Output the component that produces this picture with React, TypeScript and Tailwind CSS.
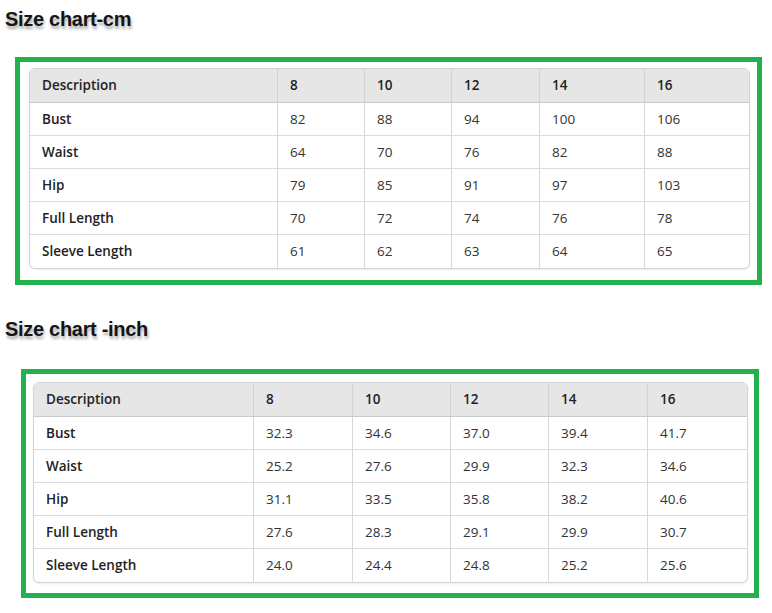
const cmRows = [
  { name: "Bust", values: ["82", "88", "94", "100", "106"] },
  { name: "Waist", values: ["64", "70", "76", "82", "88"] },
  { name: "Hip", values: ["79", "85", "91", "97", "103"] },
  { name: "Full Length", values: ["70", "72", "74", "76", "78"] },
  { name: "Sleeve Length", values: ["61", "62", "63", "64", "65"] },
];

const inchRows = [
  { name: "Bust", values: ["32.3", "34.6", "37.0", "39.4", "41.7"] },
  { name: "Waist", values: ["25.2", "27.6", "29.9", "32.3", "34.6"] },
  { name: "Hip", values: ["31.1", "33.5", "35.8", "38.2", "40.6"] },
  { name: "Full Length", values: ["27.6", "28.3", "29.1", "29.9", "30.7"] },
  { name: "Sleeve Length", values: ["24.0", "24.4", "24.8", "25.2", "25.6"] },
];

const sizes = ["8", "10", "12", "14", "16"];

type Row = { name: string; values: string[] };

function SizeTable({ rows, cols, width }: { rows: Row[]; cols: string; width: string }) {
  return (
    <div
      className={`${width} border border-[#d4d4d4] rounded-[6px] overflow-hidden bg-white shadow-[0_1px_2px_rgba(0,0,0,0.08)] text-[13.5px] text-[#333] [font-family:'Open_Sans',sans-serif]`}
    >
      {/* header */}
      <div className={`grid ${cols} h-[34px] bg-[#e6e6e6] border-b border-[#cbcbcb] font-semibold text-[#222]`}>
        <div className="flex items-center px-3 border-r border-[#d4d4d4]">Description</div>
        {sizes.map((s, i) => (
          <div
            key={s}
            className={`flex items-center px-3 ${i < sizes.length - 1 ? "border-r border-[#d4d4d4]" : ""}`}
          >
            {s}
          </div>
        ))}
      </div>

      {rows.map((row, r) => (
        <div
          key={row.name}
          className={`grid ${cols} ${r < rows.length - 1 ? "h-[33px] border-b border-[#dcdcdc]" : "h-[33px]"}`}
        >
          <div className="flex items-center px-3 border-r border-[#d9d9d9] font-semibold text-[#222]">
            {row.name}
          </div>
          {row.values.map((v, i) => (
            <div
              key={i}
              className={`flex items-center px-3 ${i < row.values.length - 1 ? "border-r border-[#d9d9d9]" : ""}`}
            >
              {v}
            </div>
          ))}
        </div>
      ))}
    </div>
  );
}

function Title({ children }: { children: string }) {
  return (
    <h2 className="pl-[5px] text-[20px] leading-[24px] h-6 font-bold tracking-[-0.3px] text-[#151515] [font-family:'Liberation_Sans',Arial,sans-serif] [text-shadow:1px_3px_3px_rgba(0,0,0,0.35)]">
      {children}
    </h2>
  );
}

export default function App() {
  return (
    <div className="w-[772px] h-[613px] bg-white pt-[7px] overflow-hidden">
      <Title>Size chart-cm</Title>

      {/* cm table */}
      <div className="mt-[26px] ml-[15px] w-[747px] border-[5px] border-[#22b14c] pl-[9px] pr-[7px] pt-[6px] pb-[11px]">
        <SizeTable
          rows={cmRows}
          width="w-[721px]"
          cols="grid-cols-[248px_87px_87px_88px_105px_104px]"
        />
      </div>

      <div className="mt-[32px]">
        <Title>Size chart -inch</Title>
      </div>

      {/* inch table */}
      <div className="mt-[28px] ml-[21px] w-[738px] border-[5px] border-[#22b14c] pl-[7px] pr-[6px] pt-[8px] pb-[10px]">
        <SizeTable
          rows={inchRows}
          width="w-[715px]"
          cols="grid-cols-[220px_99px_98px_98px_99px_99px]"
        />
      </div>
    </div>
  );
}
